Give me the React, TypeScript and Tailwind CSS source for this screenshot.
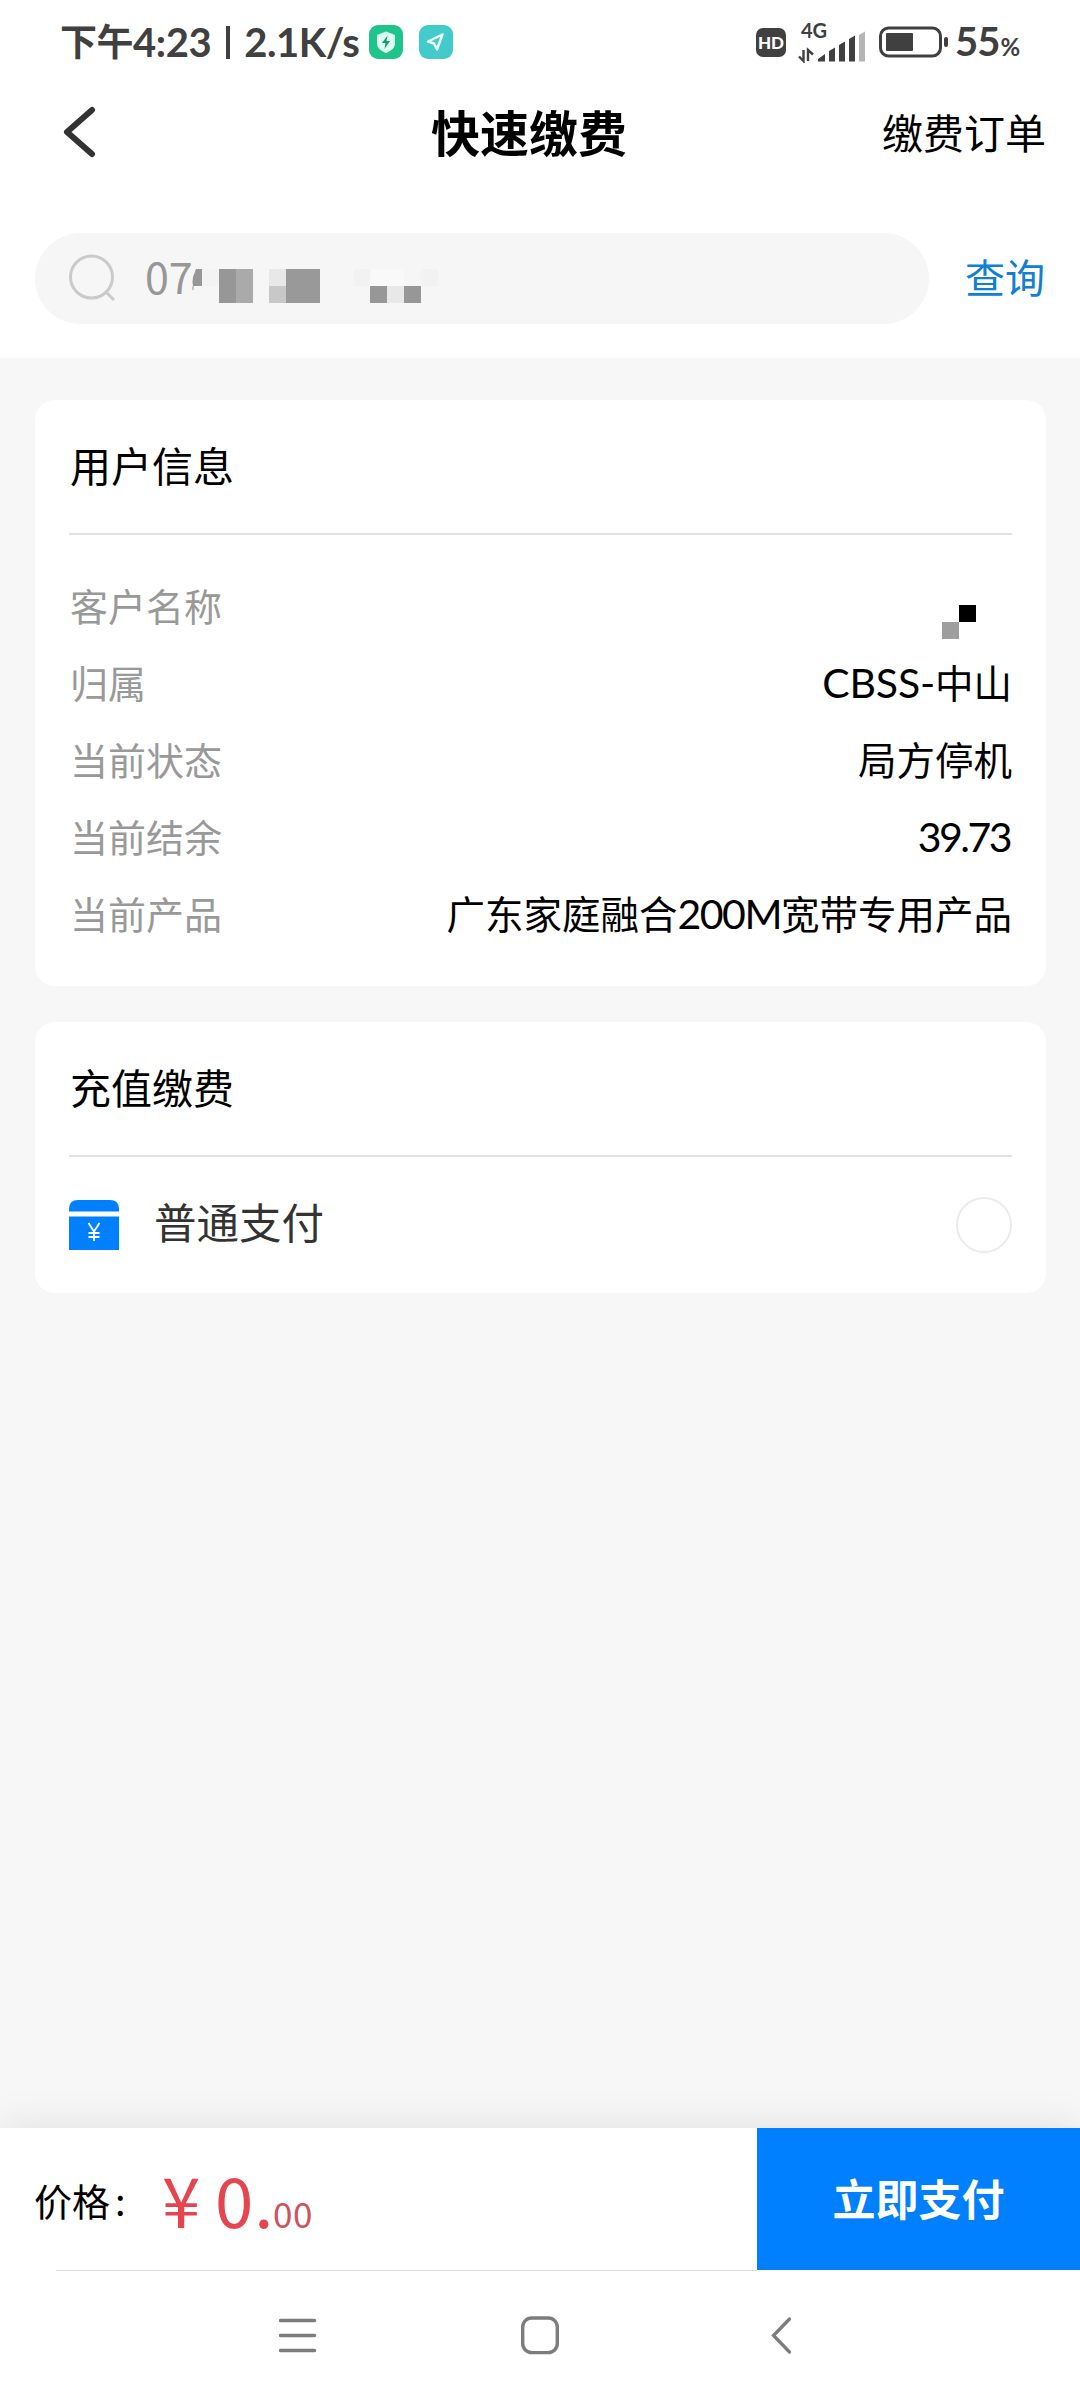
import type { ReactNode } from "react";

interface InfoRow {
  label: string;
  value: ReactNode;
}

const MaskedName = () => (
  <svg width="70" height="34" viewBox="0 0 70 34" className="mt-[39px]">
    <rect x="17" y="0" width="17" height="17" fill="#000" />
    <rect x="0" y="17" width="17" height="17" fill="#9e9e9e" />
  </svg>
);

const infoRows: InfoRow[] = [
  { label: "客户名称", value: <MaskedName /> },
  {
    label: "归属",
    value: (
      <>
        <span className="pt-px text-[41px] tracking-[-0.2px] font-['Lato',sans-serif]">CBSS-</span>中山
      </>
    ),
  },
  { label: "当前状态", value: "局方停机" },
  {
    label: "当前结余",
    value: <span className="mr-[2px] pt-px text-[41px] tracking-[-2.5px] font-['Lato',sans-serif]">39.73</span>,
  },
  {
    label: "当前产品",
    value: (
      <>
        广东家庭融合
        <span className="pt-px text-[41px] tracking-[-1.5px] font-['Lato',sans-serif]">200M</span>
        宽带专用产品
      </>
    ),
  },
];

// x, y, width, height, fill
const maskBlocks: [number, number, number, number, string][] = [
  [10, 0, 17, 17, "#f3f3f3"],
  [27, 0, 17, 34, "#979797"],
  [44, 0, 17, 34, "#aaaaaa"],
  [77, 0, 17, 17, "#e8e8e8"],
  [77, 17, 17, 17, "#c8c8c8"],
  [94, 0, 34, 34, "#999999"],
  [162, 0, 16, 17, "#f2f2f2"],
  [178, 0, 34, 17, "#f9f9f9"],
  [178, 17, 17, 17, "#979797"],
  [195, 17, 17, 17, "#e8e8e8"],
  [212, 17, 17, 17, "#979797"],
  [229, 0, 17, 17, "#f2f2f2"],
];

const StatusBar = () => (
  <div className="flex h-[84px] items-center pl-[60px] text-[#404040]">
    <div className="flex w-[309px] items-center whitespace-nowrap font-bold leading-[50px]">
      <span className="-mt-[4px] w-[73px] text-[37px] tracking-[-0.5px]">下午</span>
      <span className="text-[40px] tracking-[-0.4px] font-['Lato',sans-serif]">4:23</span>
      <span className="ml-[15px] mr-[14px] h-[33px] w-[4px] bg-[#404040]" />
      <span className="text-[40px] tracking-[-0.5px] font-['Lato',sans-serif]">2.1K/s</span>
    </div>
    <svg width="34" height="34" viewBox="0 0 34 34">
      <rect width="34" height="34" rx="9" fill="#1fc48b" />
      <path d="M17 6.5 26 10v8.500c0 4.500-4 7.500-9 9.500-5-2-9-5-9-9.500V10z" fill="#dcfff2" />
      <path d="M18.500 10.500 13 18h3.500l-1 6 5.500-8h-3.500z" fill="#159b6c" />
    </svg>
    <svg width="34" height="34" viewBox="0 0 34 34" className="ml-[16px]">
      <rect width="34" height="34" rx="9" fill="#43cbcb" />
      <path
        d="M23.500 9.500 9 16.500l6 2 3 6z"
        fill="none"
        stroke="#efffff"
        strokeWidth="2.400"
        strokeLinejoin="round"
      />
    </svg>
    <div className="ml-[303px] flex h-[29px] w-[30px] items-center justify-center rounded-[7px] bg-[#404040] text-[17px] font-black leading-none text-white font-['Lato',sans-serif]">
      HD
    </div>
    <div className="ml-[12px] flex h-[46px] w-[68px] flex-col font-['Lato',sans-serif]">
      <span className="h-[20px] pl-[3px] text-[20px] font-bold leading-[22px]">4G</span>
      <svg width="68" height="32" viewBox="0 6 68 32" className="-mt-[8px]">
        <path d="M5.500 25v11L1 31.500M10 36V25l5 4.500" fill="none" stroke="#404040" strokeWidth="2.400" />
        <path d="M20 36.500V34l7-5v7.500zM31 36.500V26l6-3.500v14zM41 36.500V20l6-3.500v20zM51 36.500V14l6-3.500v26z" fill="#404040" />
        <path d="M61 36.500V10l6-3.500v30z" fill="#b5b5b5" />
      </svg>
    </div>
    <svg width="70" height="32" viewBox="0 0 70 32" className="ml-[13px]">
      <rect x="1.500" y="2" width="60" height="28" rx="8" fill="none" stroke="#404040" strokeWidth="3" />
      <rect x="7" y="7" width="27" height="18" rx="1" fill="#404040" />
      <rect x="65" y="11" width="4" height="10" rx="2" fill="#404040" />
    </svg>
    <div className="ml-[6px] flex items-baseline pt-[4px] font-bold leading-[50px] font-['Lato',sans-serif]">
      <span className="text-[40px] tracking-[-1px]">55</span>
      <span className="ml-px text-[24px]">%</span>
    </div>
  </div>
);

const TitleBar = () => (
  <div className="flex h-[98px] items-center pb-[2px]">
    <svg width="34" height="52" viewBox="0 0 34 52" className="ml-[62px]">
      <path d="M30 4 5 26l25 22" fill="none" stroke="#333" strokeWidth="6" strokeLinecap="round" strokeLinejoin="round" />
    </svg>
    <h1 className="ml-[335px] w-[200px] whitespace-nowrap pb-[4px] text-[49px] font-bold leading-none text-black">快速缴费</h1>
    <span className="ml-[251px] whitespace-nowrap pb-[2px] text-[41px] leading-none text-black">缴费订单</span>
  </div>
);

const SearchRow = () => (
  <div className="flex h-[176px] items-center pt-[16px]">
    <div className="ml-[35px] flex h-[91px] w-[894px] items-center rounded-full bg-[#f6f6f6] pl-[34px]">
      <svg width="48" height="48" viewBox="0 0 48 48">
        <circle cx="22.500" cy="23" r="21" fill="none" stroke="#cacaca" strokeWidth="3" />
        <path d="m37 38 8 8" stroke="#cacaca" strokeWidth="3" />
      </svg>
      <span className="ml-[28px] w-[47px] pb-[6px] text-[43px] leading-none text-[#979797]">07</span>
      <svg width="250" height="34" viewBox="0 0 250 34" className="mt-[15px]">
        <path d="M4 0h6v17H1Q0 13 1 8z" fill="#979797" />
        <path d="M1 17v4" stroke="#979797" />
        {maskBlocks.map(([x, y, w, h, fill]) => (
          <rect key={`${x}-${y}`} x={x} y={y} width={w} height={h} fill={fill} />
        ))}
      </svg>
    </div>
    <span className="ml-[36px] pb-[4px] text-[40px] leading-none text-[#0f80d2]">查询</span>
  </div>
);

const NavBar = () => (
  <div className="flex h-[129px] pt-[44px] text-[#7d7d7d]">
    <svg width="38" height="40" viewBox="0 0 38 40" className="ml-[279px]">
      <path d="M1.500 5.500h34M1.500 20.500h34M1.500 35.500h34" stroke="currentColor" strokeWidth="3.500" strokeLinecap="round" />
    </svg>
    <svg width="38" height="40" viewBox="0 0 38 40" className="ml-[204px]">
      <rect x="1.700" y="3" width="34.600" height="34.600" rx="9" fill="none" stroke="currentColor" strokeWidth="3.400" />
    </svg>
    <svg width="22" height="40" viewBox="0 0 22 40" className="ml-[212px]">
      <path d="M18.500 4 2.500 20.500l16 16.500" fill="none" stroke="currentColor" strokeWidth="3.300" strokeLinecap="round" />
    </svg>
  </div>
);

const App = () => {
  return (
    <div className="flex h-[2400px] w-[1080px] flex-col overflow-hidden bg-[#f7f7f7] font-['Noto_Sans_CJK_SC',sans-serif]">
      <header className="h-[358px] shrink-0 bg-white">
        <StatusBar />
        <TitleBar />
        <SearchRow />
      </header>

      <main className="flex grow flex-col gap-[36px] pl-[35px] pr-[34px] pt-[42px]">
        <section className="h-[586px] rounded-[20px] bg-white px-[34px]">
          <h2 className="h-[135px] border-b-2 border-[#e2e2e2] pl-px text-[41px] leading-[128px] text-black">用户信息</h2>
          <div className="pt-[31px]">
            {infoRows.map((row) => (
              <div key={row.label} className="flex h-[77px] justify-between pl-px text-[38.500px] leading-[77px]">
                <span className="text-[38px] text-[#999]">{row.label}</span>
                <span className="flex text-black">{row.value}</span>
              </div>
            ))}
          </div>
        </section>

        <section className="h-[271px] rounded-[20px] bg-white px-[34px]">
          <h2 className="h-[135px] border-b-2 border-[#e2e2e2] pl-px text-[41px] leading-[128px] text-black">充值缴费</h2>
          <div className="flex items-center pt-[40px]">
            <svg width="50" height="50" viewBox="0 0 50 50">
              <path d="M0 11.500V9Q0 0 9 0h32q9 0 9 9v2.500zM0 16.500h50V50H0z" fill="#0080ff" />
              <path d="m19.500 23 5.500 8.500 5.500-8.500M25 31.500V41M19.500 33h11M19.500 37h11" fill="none" stroke="#fff" strokeWidth="1.800" />
            </svg>
            <span className="ml-[35px] -mt-[9px] text-[42.500px] leading-[56px] text-[#333]">普通支付</span>
            <span className="ml-auto size-[56px] rounded-full border-2 border-[#ebebeb]" />
          </div>
        </section>
      </main>

      <footer className="shrink-0 bg-white shadow-[0_0_40px_rgba(0,0,0,0.1)]">
        <div className="flex h-[142px]">
          <div className="flex w-[757px] whitespace-nowrap pl-[34px] leading-[142px]">
            <span className="w-[128px] pt-px text-[38px] text-black">
              价格<span className="ml-[5px]">:</span>
            </span>
            <div className="-mt-px flex items-baseline text-[#e64550]">
              <span className="w-[53px] text-[69px]">¥</span>
              <span className="w-[58px] text-[69px] tracking-[1px]">0.</span>
              <span className="text-[35px] tracking-[0.5px] text-[#cb5460]">00</span>
            </div>
          </div>
          <button className="grow pb-[4px] text-[43px] font-bold leading-none text-white bg-[#0080ff]">立即支付</button>
        </div>
        <div className="ml-[56px] mr-[323px] h-px bg-[#dedede]" />
        <NavBar />
      </footer>
    </div>
  );
};

export default App;
